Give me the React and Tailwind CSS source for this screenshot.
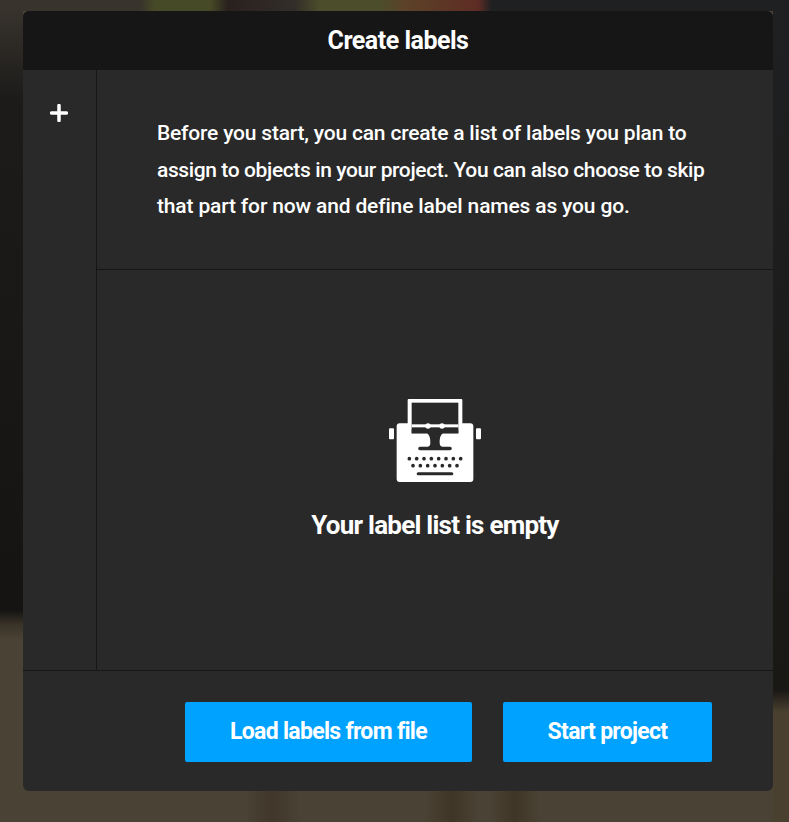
const font = { fontFamily: '"Roboto", "Liberation Sans", sans-serif' };

function TypewriterIcon() {
  const topRow = [118, 140, 162, 184, 206, 228, 250, 272];
  const bottomRow = [129, 151, 173, 195, 217, 239, 261];
  return (
    <svg width="100" height="90" viewBox="45 45 300 270" className="block">
      {/* carriage knobs */}
      <rect x="57" y="145" width="15" height="33" rx="3" fill="#fff" />
      <rect x="318" y="145" width="15" height="33" rx="3" fill="#fff" />
      {/* body */}
      <rect x="80" y="130" width="230" height="176" rx="9" fill="#fff" />
      {/* paper */}
      <rect x="113" y="57" width="164" height="106" rx="3" fill="#fff" />
      <rect x="125" y="68" width="140" height="92" fill="#292929" />
      {/* roller */}
      <rect x="125" y="133" width="140" height="9" fill="#fff" />
      <circle cx="174" cy="138" r="8" fill="#fff" />
      <circle cx="216" cy="138" r="8" fill="#fff" />
      <rect x="125" y="148" width="140" height="12" fill="#292929" />
      {/* type bar */}
      <path d="M170 158h50c-8 6-11 14-11 30 0 6 2 11 8 12h23a5 5 0 0 1 0 11h-90a5 5 0 0 1 0-11h23c6-1 8-6 8-12 0-16-3-24-11-30z" fill="#292929" />
      {/* keys */}
      {topRow.map((x) => <circle key={x} cx={x} cy="236" r="5.5" fill="#292929" />)}
      {bottomRow.map((x) => <circle key={x} cx={x} cy="257" r="5.5" fill="#292929" />)}
      <rect x="140" y="277" width="110" height="9" rx="4.5" fill="#292929" />
    </svg>
  );
}

export default function App() {
  return (
    <div
      className="h-[822px] w-full pl-[23px] pt-[11px] [background:linear-gradient(90deg,#38332c_0,#38332c_140px,#474a26_155px,#474a26_210px,#29211e_228px,#332e29_295px,#4b4d2b_320px,#4b4d2b_380px,#5c4228_405px,#5e2c24_478px,#1f2022_492px,#1f2022_789px)_0_0/100%_11px_no-repeat,linear-gradient(180deg,#3a352e_0,#1c1b1a_100px,#151412_610px,#3a3329_625px,#4a4234_640px,#4a4234_100%)_0_0/23px_100%_no-repeat,linear-gradient(180deg,#1f2022_0,#1a1815_690px,#49402f_712px,#49402f_100%)_100%_0/16px_100%_no-repeat,linear-gradient(90deg,#4a4234_0,#4a4234_245px,#40372a_272px,#4a4234_300px,#4a4234_425px,#3f3527_452px,#4a4234_478px,#4a4234_490px,#3f3527_515px,#4a4234_540px,#4a4234_100%)]"
      style={font}
    >
      <div className="w-[750px] h-[780px] rounded-md overflow-hidden bg-[#292929] text-white flex flex-col">
        <div className="h-[59px] bg-[#161616] flex items-center justify-center text-[25px] font-bold tracking-[-0.5px]">
          Create labels
        </div>

        <div className="flex-1 flex min-h-0">
          <div className="w-[73px] pt-[34px] pr-px flex justify-center shrink-0">
            <svg width="18" height="18" viewBox="0 0 18 18">
              <path d="M9 1.5v15M1.5 9h15" stroke="#fff" strokeWidth="3.5" strokeLinecap="round" />
            </svg>
          </div>

          <div className="flex-1 flex flex-col border-l border-[#161616]">
            <div className="h-[200px] border-b border-[#161616] pl-[60px] pt-[45px] pr-[60px] text-[21px] leading-[36.5px] font-medium">
              <p className="whitespace-nowrap tracking-[-0.2px]">Before you start, you can create a list of labels you plan to</p>
              <p className="whitespace-nowrap tracking-[-0.39px]">assign to objects in your project. You can also choose to skip</p>
              <p className="whitespace-nowrap tracking-[-0.16px]">that part for now and define label names as you go.</p>
            </div>
            <div className="flex-1 flex flex-col items-center pt-[125px]">
              <TypewriterIcon />
              <div className="mt-[20px] text-[26px] leading-[40px] font-bold tracking-[-0.75px]">Your label list is empty</div>
            </div>
          </div>
        </div>

        <div className="h-[121px] border-t border-[#161616] flex justify-end gap-[31px] pt-[31px] pr-[61px]">
          <button className="w-[287px] h-[60px] rounded-[2px] bg-[#00a2ff] text-white text-[23px] font-bold tracking-[-0.7px]">
            Load labels from file
          </button>
          <button className="w-[209px] h-[60px] rounded-[2px] bg-[#00a2ff] text-white text-[23px] font-bold tracking-[-0.7px]">
            Start project
          </button>
        </div>
      </div>
    </div>
  );
}
